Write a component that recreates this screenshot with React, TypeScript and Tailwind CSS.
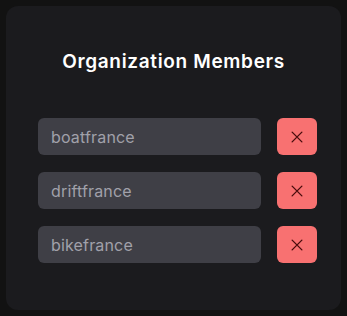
import React from 'react';

const members = ['boatfrance', 'driftfrance', 'bikefrance'];

const XIcon: React.FC = () => (
  <svg width="18" height="18" viewBox="0 0 24 24" fill="none" stroke="currentColor" strokeWidth="1.8" strokeLinecap="round">
    <path d="M5.5 5.5l13 13M18.5 5.5l-13 13" />
  </svg>
);

export default function App() {
  return (
    <div className="w-[347px] h-[316px] bg-[#121212] p-[6px] font-['Inter',sans-serif]">
      <div className="h-full rounded-xl bg-[#1b1b1e] pt-[44px] pl-8 pr-6">
        <h2 className="text-center text-[19px] font-semibold text-white tracking-[0.035em] leading-6 pr-2">
          Organization Members
        </h2>
        <div className="mt-[44px] flex flex-col gap-[17px]">
          {members.map((m) => (
            <div key={m} className="flex items-center gap-4">
              <div className="flex-1 h-[37px] rounded-md bg-[#3f3f46] pl-[13px] flex items-center text-[16px] tracking-[0.01em] text-[#a1a1aa]">
                {m}
              </div>
              <button className="w-10 h-[37px] rounded-md bg-[#f87171] flex items-center justify-center text-[#4a0d0d]">
                <XIcon />
              </button>
            </div>
          ))}
        </div>
      </div>
    </div>
  );
}
